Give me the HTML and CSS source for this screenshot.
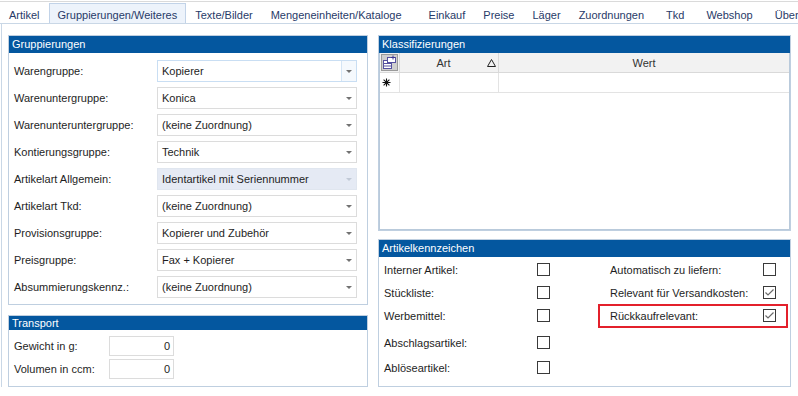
FILE: index.html
```html
<!DOCTYPE html>
<html lang="de">
<head>
    <meta charset="UTF-8">
    <title>Artikel - Gruppierungen/Weiteres</title>
    <link rel="stylesheet" href="styles.css">
</head>
<body>
    <div class="tabs">
        <span class="tab">Artikel</span>
        <span class="tab active">Gruppierungen/Weiteres</span>
        <span class="tab">Texte/Bilder</span>
        <span class="tab wide">Mengeneinheiten/Kataloge</span>
        <span class="tab">Einkauf</span>
        <span class="tab">Preise</span>
        <span class="tab">Läger</span>
        <span class="tab pad">Zuordnungen</span>
        <span class="tab pad">Tkd</span>
        <span class="tab pad">Webshop</span>
        <span class="tab">Über</span>
    </div>

    <div class="main">
        <div class="col col-left">
            <section class="panel">
                <div class="panel-head">Gruppierungen</div>
                <div class="form">
                    <span class="label">Warengruppe:</span>
                    <div class="combo focus"><span>Kopierer</span><span class="btn"><i class="arrow"></i></span></div>
                    <span class="label">Warenuntergruppe:</span>
                    <div class="combo"><span>Konica</span><span class="btn"><i class="arrow"></i></span></div>
                    <span class="label">Warenunteruntergruppe:</span>
                    <div class="combo"><span>(keine Zuordnung)</span><span class="btn"><i class="arrow"></i></span></div>
                    <span class="label">Kontierungsgruppe:</span>
                    <div class="combo"><span>Technik</span><span class="btn"><i class="arrow"></i></span></div>
                    <span class="label">Artikelart Allgemein:</span>
                    <div class="combo off"><span>Identartikel mit Seriennummer</span><span class="btn"><i class="arrow"></i></span></div>
                    <span class="label">Artikelart Tkd:</span>
                    <div class="combo"><span>(keine Zuordnung)</span><span class="btn"><i class="arrow"></i></span></div>
                    <span class="label">Provisionsgruppe:</span>
                    <div class="combo"><span>Kopierer und Zubehör</span><span class="btn"><i class="arrow"></i></span></div>
                    <span class="label">Preisgruppe:</span>
                    <div class="combo"><span>Fax + Kopierer</span><span class="btn"><i class="arrow"></i></span></div>
                    <span class="label">Absummierungskennz.:</span>
                    <div class="combo"><span>(keine Zuordnung)</span><span class="btn"><i class="arrow"></i></span></div>
                </div>
            </section>

            <section class="panel transport">
                <div class="panel-head slim">Transport</div>
                <div class="form small">
                    <span class="label">Gewicht in g:</span>
                    <div class="num">0</div>
                    <span class="label">Volumen in ccm:</span>
                    <div class="num">0</div>
                </div>
            </section>
        </div>

        <div class="col col-right">
            <section class="panel classes">
                <div class="panel-head">Klassifizierungen</div>
                <div class="gtable">
                    <div class="gcell ghead chooser">
                        <svg width="17" height="17" viewBox="0 0 17 17">
                            <rect x="0.5" y="0.5" width="16" height="16" fill="#cfcfcf" stroke="#9a9a9a"/>
                            <rect x="2.5" y="6.5" width="8" height="8" fill="#fff" stroke="#55509f"/>
                            <path d="M2.5 9.5h8M2.5 12h8" stroke="#55509f"/>
                            <rect x="6.5" y="3.5" width="8" height="5" fill="#fff" stroke="#55509f"/>
                            <path d="M12 1.5v4M10 3.5h4" stroke="#3a3590"/>
                        </svg>
                    </div>
                    <div class="gcell ghead art">
                        <span class="gtitle">Art</span>
                        <svg width="9" height="8" viewBox="0 0 9 8"><polygon points="4.5,0.5 8.5,7.5 0.5,7.5" fill="none" stroke="#222"/></svg>
                    </div>
                    <div class="gcell ghead"><span class="gtitle">Wert</span></div>
                    <div class="gcell newrow">
                        <svg width="9" height="9" viewBox="0 0 9 9"><path d="M4.5 0.5v8M0.5 4.5h8M1.6 1.6l5.8 5.8M7.4 1.6l-5.8 5.8" stroke="#111" stroke-width="1.1"/></svg>
                    </div>
                    <div class="gcell"></div>
                    <div class="gcell"></div>
                </div>
            </section>

            <section class="panel flags-panel">
                <div class="panel-head">Artikelkennzeichen</div>
                <div class="flags">
                    <div class="flag-col">
                        <div class="flag"><span>Interner Artikel:</span><span class="check"></span></div>
                        <div class="flag"><span>Stückliste:</span><span class="check"></span></div>
                        <div class="flag"><span>Werbemittel:</span><span class="check"></span></div>
                        <div class="flag gap-lg"><span>Abschlagsartikel:</span><span class="check"></span></div>
                        <div class="flag gap-sm"><span>Ablöseartikel:</span><span class="check"></span></div>
                    </div>
                    <div class="flag-col">
                        <div class="flag"><span>Automatisch zu liefern:</span><span class="check"></span></div>
                        <div class="flag"><span>Relevant für Versandkosten:</span><span class="check"><svg width="11" height="11" viewBox="0 0 11 11"><polyline points="1.5,5.5 4,8 9.5,2.5" fill="none" stroke="#6a6a6a" stroke-width="1.2"/></svg></span></div>
                        <div class="flag marked"><span>Rückkaufrelevant:</span><span class="check"><svg width="11" height="11" viewBox="0 0 11 11"><polyline points="1.5,5.5 4,8 9.5,2.5" fill="none" stroke="#6a6a6a" stroke-width="1.2"/></svg></span></div>
                    </div>
                </div>
            </section>
        </div>
    </div>
</body>
</html>
```

FILE: styles.css
```css
body {
    margin: 0;
    width: 798px;
    height: 396px;
    overflow: hidden;
    background: #fff;
    color: #1e1e1e;
    font-family: "Liberation Sans", Arial, sans-serif;
    font-size: 11px;
}

/* tab strip */
.tabs {
    display: flex;
    height: 21px;
    margin-top: 1px;
    border-top: 1px solid #dadada;
    border-bottom: 1px solid #c9d7e6;
    white-space: nowrap;
    overflow: hidden;
}

.tab {
    margin-top: 1px;
    padding: 5px 8px 1px;
    line-height: 13px;
    border: 1px solid transparent;
    border-bottom: 0;
    color: #283a68;
}

.tab.active {
    background: #edf3fb;
    border-color: #c2d3e8;
}

.tab.wide {
    padding-right: 17px;
}

.tab.pad {
    padding-right: 12px;
}

/* content */
.main {
    box-sizing: border-box;
    height: 363px;
    margin-left: 1px;
    border-left: 1px solid #c9d7e6;
    padding: 11px 6px 0;
    display: grid;
    grid-template-columns: 360px 413px;
    column-gap: 10px;
}

.col {
    display: flex;
    flex-direction: column;
}

.col-left {
    gap: 10px;
}

.col-right {
    gap: 8px;
}

.panel {
    border: 1px solid #bfcfe0;
    background: #fff;
    display: flex;
    flex-direction: column;
}

.panel-head {
    height: 17px;
    line-height: 17px;
    padding-left: 3px;
    background: #04579f;
    color: #fff;
}

.panel-head.slim {
    height: 14px;
    line-height: 14px;
}

.form {
    display: grid;
    grid-template-columns: 143px 200px;
    row-gap: 5px;
    align-items: center;
    padding: 7px 0 6px 5px;
}

.form.small {
    grid-template-columns: 95px 65px;
    row-gap: 3px;
    padding: 6px 0 7px 5px;
}

.combo {
    box-sizing: border-box;
    height: 22px;
    display: flex;
    align-items: center;
    padding-left: 4px;
    border: 1px solid #dcdcdc;
    background: #fff;
}

.combo .btn {
    margin-left: auto;
    width: 14px;
    align-self: stretch;
    display: flex;
    align-items: center;
    justify-content: center;
}

.arrow {
    width: 0;
    height: 0;
    border-left: 3px solid transparent;
    border-right: 3px solid transparent;
    border-top: 3px solid #727272;
}

.combo.focus {
    border-color: #c9def3;
}

.combo.focus .btn {
    border-left: 1px solid #d4e5f5;
    background: #f5f9fd;
}

.combo.off {
    background: #e5eaf4;
    border-color: #e0e6ef;
}

.combo.off .arrow {
    border-top-color: #c1c9d6;
}

.num {
    box-sizing: border-box;
    height: 20px;
    line-height: 18px;
    padding-right: 3px;
    text-align: right;
    border: 1px solid #dcdcdc;
}

.transport {
    flex: 1;
}

/* Klassifizierungen grid */
.classes {
    height: 196px;
    box-sizing: border-box;
}

.gtable {
    flex: 1;
    border: 1px solid #b9cadb;
    border-top: 0;
    display: grid;
    grid-template-columns: 20px 99px 1fr;
    grid-template-rows: 20px 20px;
    align-content: start;
}

.gcell {
    box-sizing: border-box;
    border-right: 1px solid #e3e3e3;
    border-bottom: 1px solid #e3e3e3;
    display: flex;
    align-items: center;
}

.gcell:nth-child(3n) {
    border-right: 0;
}

.ghead {
    background: #f2f2f2;
    border-color: #d9d9d9;
    color: #333;
}

.gtitle {
    flex: 1;
    text-align: center;
}

.art svg {
    margin-right: 2px;
}

.chooser {
    padding-left: 1px;
}

.newrow {
    padding-left: 2px;
}

/* Artikelkennzeichen */
.flags-panel {
    flex: 1;
}

.flags {
    display: flex;
    gap: 60px;
    padding: 1px 0 0 5px;
}

.flag-col {
    width: 166px;
    display: flex;
    flex-direction: column;
}

.flag {
    height: 23px;
    display: flex;
    align-items: center;
    justify-content: space-between;
}

.flag.gap-lg {
    margin-top: 4px;
}

.flag.gap-sm {
    margin-top: 2px;
}

.check {
    box-sizing: border-box;
    width: 13px;
    height: 13px;
    border: 1px solid #3a3a3a;
    background: #fff;
    display: flex;
}

.flag.marked {
    position: relative;
}

.flag.marked::after {
    content: "";
    position: absolute;
    left: -12px;
    right: -12px;
    top: 0;
    bottom: -1px;
    border: 2px solid #e3202b;
}
```
